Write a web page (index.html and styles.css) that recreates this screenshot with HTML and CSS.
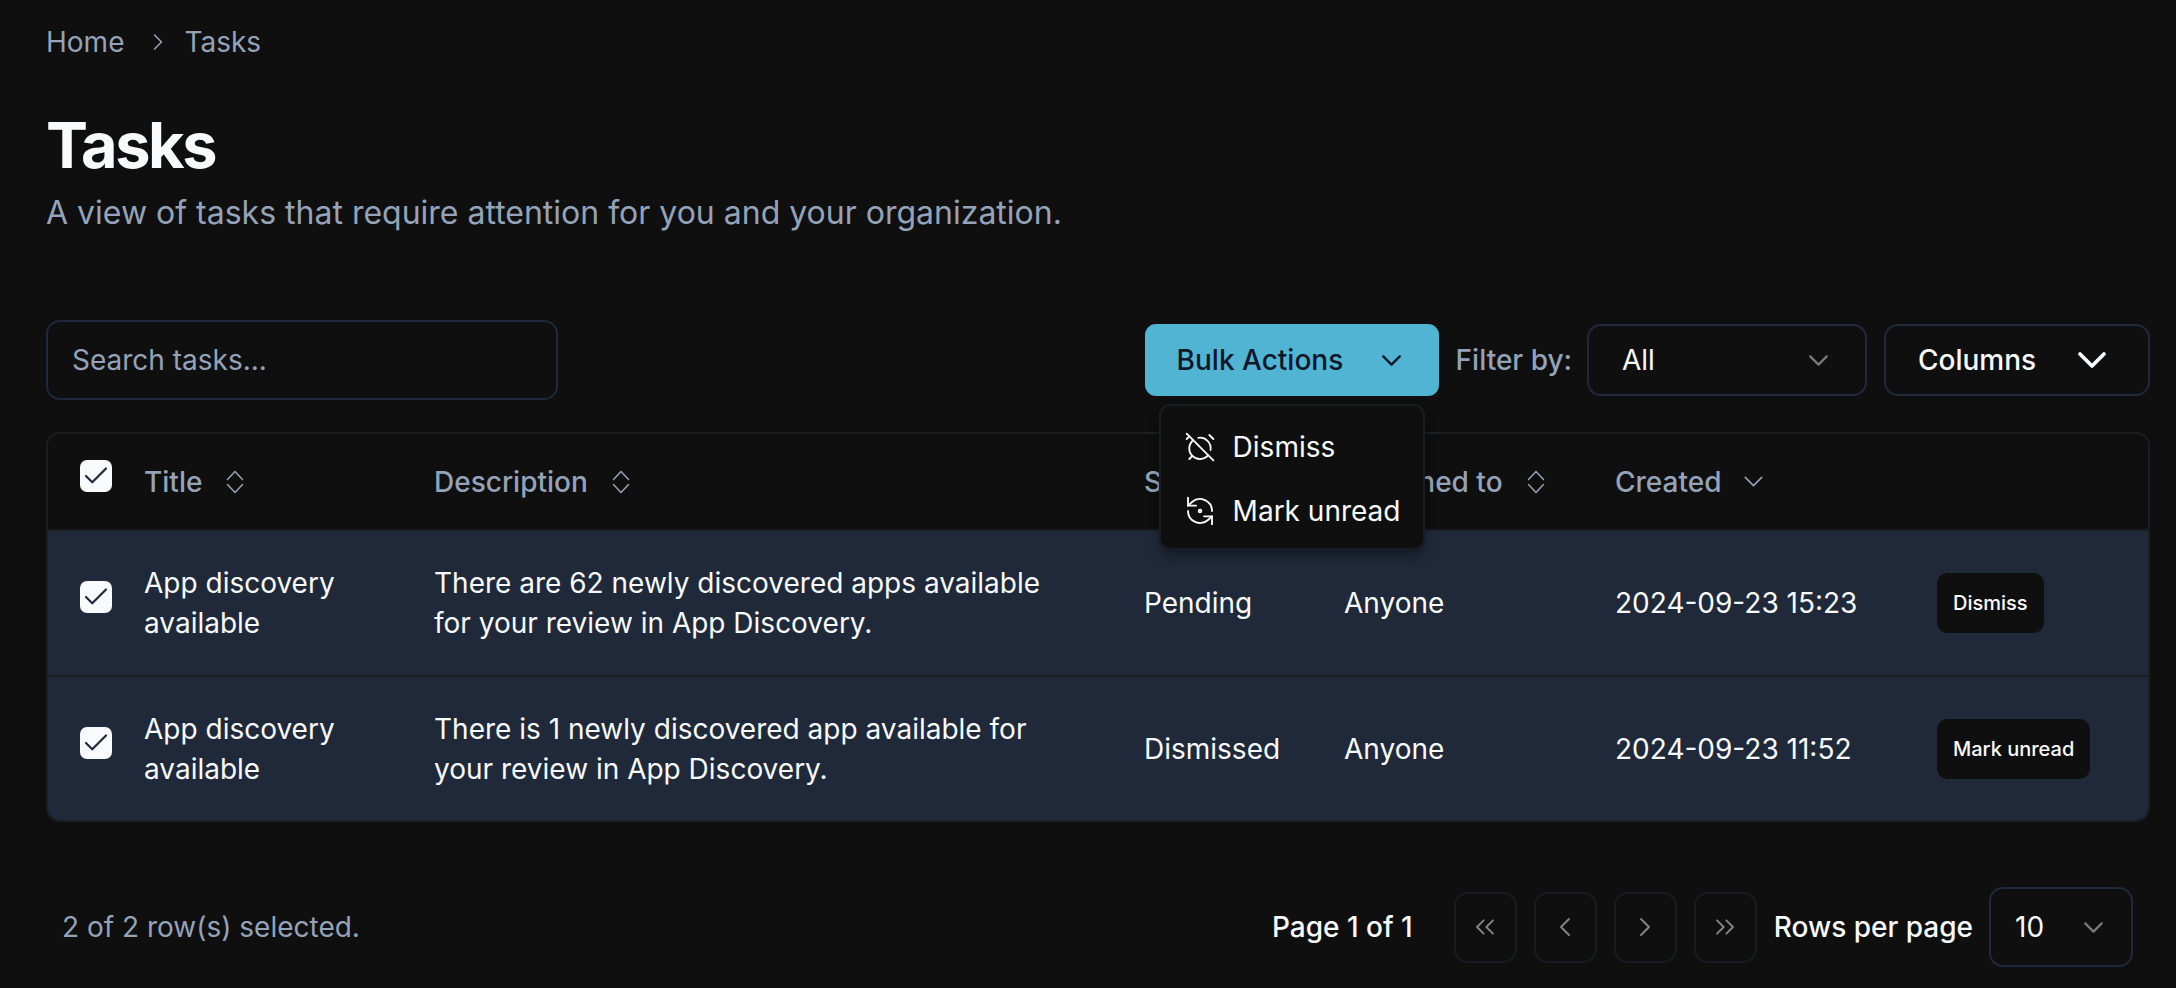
FILE: index.html
```html
<!DOCTYPE html>
<html lang="en">
<head>
<meta charset="utf-8">
<title>Tasks</title>
<link rel="stylesheet" href="styles.css">
</head>
<body>
<svg class="sprite" aria-hidden="true">
  <symbol id="chev" viewBox="0 0 24 24"><path d="m6 9 6 6 6-6"/></symbol>
  <symbol id="updown" viewBox="0 0 18 24"><path d="M1.5 9.5 9 1.5l7.5 8M1.5 14.5 9 22.5l7.5-8"/></symbol>
  <symbol id="check" viewBox="0 0 24 24"><path d="M20 6 9 17l-5-5"/></symbol>
</svg>
<main class="page">
  <nav class="crumbs">
    <span>Home</span>
    <svg class="crumb-sep" viewBox="0 0 24 24"><path d="m9 18 6-6-6-6"/></svg>
    <span>Tasks</span>
  </nav>
  <h1 class="title">Tasks</h1>
  <p class="subtitle">A view of tasks that require attention for you and your organization.</p>

  <section class="toolbar">
    <div class="search">Search tasks...</div>
    <div class="tools">
      <div class="bulk-wrap">
        <button class="bulk">Bulk Actions<svg class="ic-select-lg"><use href="#chev"/></svg></button>
        <div class="menu">
          <div class="menu-item">
            <svg class="ic-menu" viewBox="0 0 24 24"><path d="M6.87 6.87a8 8 0 1 0 11.26 11.26"/><path d="M19.9 14.25a8 8 0 0 0-9.15-9.15"/><path d="m22 6-3-3"/><path d="M6.26 18.67 4 21"/><path d="m2 2 20 20"/><path d="M4 4 2 6"/></svg>
            <span>Dismiss</span>
          </div>
          <div class="menu-item">
            <svg class="ic-menu" viewBox="0 0 24 24"><path d="M3 2v6h6"/><path d="M21 12A9 9 0 0 0 6 5.3L3 8"/><path d="M21 22v-6h-6"/><path d="M3 12a9 9 0 0 0 15 6.7l3-2.7"/><circle cx="12" cy="12" r="1"/></svg>
            <span>Mark unread</span>
          </div>
        </div>
      </div>
      <span class="filter-label">Filter by:</span>
      <div class="select filter"><span>All</span><svg class="ic-select"><use href="#chev"/></svg></div>
      <button class="columns">Columns<svg class="ic-columns"><use href="#chev"/></svg></button>
    </div>
  </section>

  <div class="table-wrap">
    <table class="table">
      <colgroup>
        <col class="c-check"><col class="c-title"><col class="c-desc"><col class="c-status"><col class="c-assign"><col class="c-created"><col class="c-action">
      </colgroup>
      <thead>
        <tr>
          <th class="check-cell"><span class="checkbox"><svg><use href="#check"/></svg></span></th>
          <th><span class="th-in">Title<svg class="ic-sort"><use href="#updown"/></svg></span></th>
          <th><span class="th-in">Description<svg class="ic-sort"><use href="#updown"/></svg></span></th>
          <th><span class="th-in">Status</span></th>
          <th><span class="th-in">Assigned to<svg class="ic-sort"><use href="#updown"/></svg></span></th>
          <th><span class="th-in">Created<svg class="ic-desc"><use href="#chev"/></svg></span></th>
          <th></th>
        </tr>
      </thead>
      <tbody>
        <tr>
          <td class="check-cell"><span class="checkbox"><svg><use href="#check"/></svg></span></td>
          <td>App discovery<br>available</td>
          <td><div class="desc">There are 62 newly discovered apps available for your review in App Discovery.</div></td>
          <td>Pending</td>
          <td>Anyone</td>
          <td>2024-09-23 15:23</td>
          <td><button class="row-btn">Dismiss</button></td>
        </tr>
        <tr>
          <td class="check-cell"><span class="checkbox"><svg><use href="#check"/></svg></span></td>
          <td>App discovery<br>available</td>
          <td><div class="desc">There is 1 newly discovered app available for your review in App Discovery.</div></td>
          <td>Dismissed</td>
          <td>Anyone</td>
          <td>2024-09-23 11:52</td>
          <td><button class="row-btn">Mark unread</button></td>
        </tr>
      </tbody>
    </table>
  </div>

  <footer class="footer">
    <span class="selected">2 of 2 row(s) selected.</span>
    <div class="pager">
      <span class="page-label">Page 1 of 1</span>
      <div class="page-btns">
        <button class="page-btn"><svg viewBox="0 0 24 24"><path d="m11 17-5-5 5-5"/><path d="m18 17-5-5 5-5"/></svg></button>
        <button class="page-btn"><svg viewBox="0 0 24 24"><path d="m15 18-6-6 6-6"/></svg></button>
        <button class="page-btn"><svg viewBox="0 0 24 24"><path d="m9 18 6-6-6-6"/></svg></button>
        <button class="page-btn"><svg viewBox="0 0 24 24"><path d="m6 17 5-5-5-5"/><path d="m13 17 5-5-5-5"/></svg></button>
      </div>
      <span class="rows-label">Rows per page</span>
      <div class="select rows"><span>10</span><svg class="ic-select"><use href="#chev"/></svg></div>
    </div>
  </footer>
</main>
</body>
</html>
```

FILE: styles.css
```css
* { box-sizing: border-box; }
html, body { margin: 0; height: 100%; }
body {
  background: #0f0f10;
  color: #f8fafc;
  font-family: Inter, "Liberation Sans", sans-serif;
  font-size: 28px;
  line-height: 40px;
  overflow: hidden;
}
button { font: inherit; color: inherit; background: none; border: 0; padding: 0; }
svg { fill: none; stroke: currentColor; stroke-linecap: round; stroke-linejoin: round; stroke-width: 2; display: block; flex: none; }
.sprite { display: none; }

.page { padding: 22px 26px 0 46px; }

.crumbs { display: flex; align-items: center; color: #94a3b8; }
.crumb-sep { width: 28px; height: 28px; stroke-width: 1.3; margin: 0 12px 0 20px; }

.title { margin: 48px 0 0; font-size: 63px; line-height: 70px; font-weight: 700; letter-spacing: -0.038em; }
.subtitle { margin: 13px 0 0; color: #94a3b8; font-size: 32px; }

.toolbar { display: flex; align-items: center; justify-content: space-between; margin-top: 87px; }
.search {
  width: 512px; height: 80px; padding: 0 24px;
  display: flex; align-items: center;
  border: 2px solid #1e293b; border-radius: 14px;
  color: #94a3b8;
}
.tools { display: flex; align-items: center; gap: 17px; }
.bulk-wrap { position: relative; }
.bulk {
  width: 294px; height: 72px; padding: 0 31px 0 32px;
  display: flex; align-items: center; justify-content: space-between;
  background: #52b4d3; color: #0f172a; border-radius: 11px; font-weight: 500;
}
.ic-select-lg { width: 33px; height: 33px; stroke-width: 1.7; }
.menu {
  position: absolute; top: 80px; left: 14px; width: 266px; height: 146px;
  padding: 9px 0 0 23px;
  background: #0f0f10; border: 2px solid #1a1d24; border-radius: 11px;
  box-shadow: 0 6px 12px rgba(0,0,0,.35);
  z-index: 2;
}
.menu-item { display: flex; align-items: center; gap: 17px; height: 64px; }
.ic-menu { width: 32px; height: 32px; stroke-width: 1.4; }

.filter-label { color: #94a3b8; font-weight: 500; margin-right: -2px; }
.select {
  display: flex; align-items: center; justify-content: space-between;
  border: 2px solid #1e293b; border-radius: 14px;
}
.filter { width: 280px; height: 72px; padding: 0 30px 0 33px; }
.ic-select { width: 33px; height: 33px; stroke-width: 1.6; color: #7a7a7a; }
.columns {
  width: 266px; height: 72px; padding: 0 32px;
  display: flex; align-items: center; justify-content: space-between;
  border: 2px solid #1e293b; border-radius: 14px; font-weight: 500;
}
.ic-columns { width: 48px; height: 48px; stroke-width: 1.9; }

.table-wrap {
  margin-top: 32px; height: 390px;
  border: 2px solid #1c1e24; border-radius: 14px; overflow: hidden;
}
.table { width: 100%; height: 100%; table-layout: fixed; border-collapse: collapse; }
.c-check { width: 96px; }
.c-title { width: 290px; }
.c-desc { width: 710px; }
.c-status { width: 200px; }
.c-assign { width: 271px; }
.c-created { width: 322px; }
th, td { padding: 0; text-align: left; vertical-align: middle; }
thead tr { height: 96px; background: #0f0f10; }
th { color: #94a3b8; font-weight: 500; }
.th-in { display: flex; align-items: center; gap: 24px; }
.ic-sort { width: 18px; height: 24px; stroke-width: 1.5; }
.ic-desc { width: 33px; height: 33px; stroke-width: 1.1; margin-left: -8px; }
tbody tr { background: #1f293a; border-top: 2px solid #1c1e24; }
tbody tr:first-child td { height: 146px; }
.check-cell { padding: 0 0 12px 32px; }
.checkbox { display: flex; align-items: center; justify-content: center; width: 32px; height: 32px; background: #f8fafc; color: #1e293b; border-radius: 7px; }
.checkbox svg { width: 30px; height: 30px; stroke-width: 1.7; }
.desc { width: 640px; }
.row-btn {
  height: 60px; padding: 0 16px;
  background: #0f0f10; border-radius: 11px; color: #f8fafc;
  font-weight: 500; font-size: 20px; line-height: 28px; display: block;
}

.footer { display: flex; align-items: center; justify-content: space-between; margin-top: 65px; padding: 0 17px 0 16px; }
.selected { color: #94a3b8; }
.pager { display: flex; align-items: center; }
.page-label { font-weight: 500; margin-right: 41px; }
.page-btns { display: flex; gap: 17px; margin-right: 17px; }
.page-btn {
  width: 63px; height: 71px;
  display: flex; align-items: center; justify-content: center;
  border: 2px solid #1e293b; border-radius: 14px;
  color: #f8fafc; opacity: .5;
}
.page-btn svg { width: 32px; height: 32px; stroke-width: 1.4; }
.rows-label { font-weight: 500; margin-right: 16px; }
.rows { width: 144px; height: 80px; padding: 0 21px 0 24px; }
```
